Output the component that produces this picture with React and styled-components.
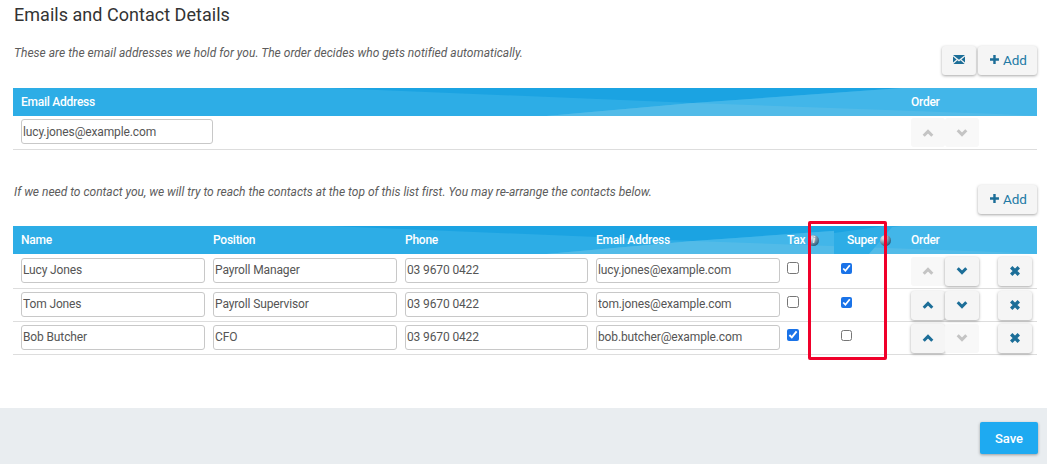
import styled, { createGlobalStyle } from 'styled-components';

const Global = createGlobalStyle`
  html, body {
    margin: 0;
    padding: 0;
    background: #fff;
    font-family: Roboto, "Liberation Sans", Arial, sans-serif;
  }
`;

const Page = styled.div`
  position: relative;
  width: 1047px;
  height: 464px;
  overflow: hidden;
  display: flex;
  flex-direction: column;
`;
const Content = styled.div`
  height: 408px;
  padding: 4px 10px 0 13px;
  box-sizing: border-box;
`;
const Title = styled.h2`
  margin: 0 0 0 1px;
  font-size: 18px;
  font-weight: 400;
  line-height: 21px;
  letter-spacing: 0.03px;
  color: #333;
`;
const Intro = styled.div`
  display: flex;
  justify-content: space-between;
  align-items: flex-start;
  height: ${({ $height }) => $height}px;
  margin-top: ${({ $top }) => $top}px;
`;
const Note = styled.p`
  margin: 0 0 0 1px;
  font-size: 12px;
  font-style: italic;
  line-height: 14px;
  letter-spacing: ${({ $spacing }) => $spacing}px;
  color: #5c5c5c;
`;
const Buttons = styled.div`
  display: flex;
  gap: 2px;
`;
const Button = styled.button`
  height: 29px;
  padding: 0 ${({ $wide }) => ($wide ? 10 : 0)}px 2px ${({ $wide }) => ($wide ? 12 : 0)}px;
  width: ${({ $wide }) => ($wide ? '59px' : '34px')};
  display: flex;
  align-items: center;
  justify-content: center;
  gap: 4px;
  border: 0;
  border-radius: 3px;
  background: #f5f5f5;
  box-shadow: 0 1px 3px rgba(0, 0, 0, 0.35);
  color: #2179a5;
  font: 400 13.5px Roboto, "Liberation Sans", sans-serif;
`;
const Head = styled.div`
  position: relative;
  height: 28px;
  background: #2dade6;
  overflow: hidden;
`;
const Wave = styled.svg`
  position: absolute;
  inset: 0;
  width: 100%;
  height: 100%;
`;
const Grid = styled.div`
  position: relative;
  display: grid;
  grid-template-columns: ${({ $cols }) => $cols};
  padding-left: 8px;
  align-items: center;
  height: 100%;
  box-sizing: border-box;
`;
const Col = styled.div`
  display: flex;
  align-items: center;
  gap: 3px;
  font-size: 12px;
  font-weight: 500;
  letter-spacing: -0.25px;
  color: #fff;
`;
const Info = styled.span`
  width: 11px;
  height: 11px;
  border-radius: 50%;
  background: radial-gradient(circle at 30% 25%, #cfdbe3 10%, #2c5f80 75%);
  color: #fff;
  font-size: 9px;
  font-style: italic;
  line-height: 11px;
  text-align: center;
`;
const Row = styled.div`
  height: ${({ $height }) => $height}px;
  border-bottom: 1px solid #ddd;
  box-sizing: border-box;
`;
const Field = styled.input`
  width: ${({ $width }) => $width}px;
  height: 25px;
  margin-bottom: 2px;
  padding: 0 2px 0 1px;
  box-sizing: border-box;
  border: 1px solid #c8c8c8;
  border-radius: 3px;
  background: #fff;
  color: #555;
  font: 400 12px Roboto, "Liberation Sans", sans-serif;
  letter-spacing: -0.13px;
  outline: none;
`;
const Check = styled.input.attrs({ type: 'checkbox', readOnly: true })`
  width: ${({ $size }) => $size}px;
  height: ${({ $size }) => $size}px;
  margin: 0 0 6px ${({ $left }) => $left}px;
  accent-color: #1a73e8;
`;
const Order = styled.div`
  display: flex;
`;
const Arrow = styled.button`
  width: 34px;
  height: 29px;
  padding: 0;
  display: flex;
  align-items: center;
  justify-content: center;
  border: 0;
  border-radius: 3px;
  background: ${({ disabled }) => (disabled ? '#f8f8f8' : '#f5f5f5')};
  box-shadow: ${({ disabled }) =>
    disabled ? 'none' : '0 1px 3px rgba(0, 0, 0, 0.35)'};
`;
const Footer = styled.div`
  flex: 1;
  display: flex;
  justify-content: flex-end;
  align-items: flex-start;
  padding: 14px 9px 0 0;
  background: #e9edf0;
`;
const Save = styled.button`
  width: 58px;
  height: 32px;
  border: 0;
  border-radius: 2px;
  background: #1eaaf1;
  box-shadow: 0 1px 3px rgba(0, 0, 0, 0.35);
  color: #fff;
  font: 500 13px Roboto, "Liberation Sans", sans-serif;
`;
const Highlight = styled.div`
  position: absolute;
  left: 808px;
  top: 221px;
  width: 79px;
  height: 139px;
  box-sizing: border-box;
  border: 3px solid #f0002a;
  border-radius: 2px;
  pointer-events: none;
`;

const Chevron = ({ up, disabled }) => (
  <svg width="12" height="8" viewBox="0 0 12 8">
    <path
      d={up ? 'M1.7 6.7 6 2.4l4.3 4.3' : 'M1.7 1.3 6 5.6l4.3-4.3'}
      fill="none"
      stroke={disabled ? '#c4c4c4' : '#1c6e98'}
      strokeWidth="3"
    />
  </svg>
);
const Plus = () => (
  <svg width="11" height="11" viewBox="0 0 11 11">
    <path d="M5.5 0v11M0 5.5h11" stroke="#1c6e98" strokeWidth="3" />
  </svg>
);
const Cross = () => (
  <svg width="10" height="10" viewBox="0 0 10 10">
    <path d="M1.2 1.2l7.6 7.6M8.8 1.2L1.2 8.8" stroke="#1c6e98" strokeWidth="3.4" />
  </svg>
);
const Mail = () => (
  <svg width="12" height="9" viewBox="0 0 12 9">
    <path d="M0 0h12L6 4.8zM0 1.6v6L3.6 4.5zM12 1.6v6L8.4 4.5zM4.4 5.2 6 6.4l1.6-1.2L11.6 9H.4z" fill="#1c6e98" />
  </svg>
);

const HeadWave = ({ patch }) => (
  <Wave viewBox="0 0 1024 28" preserveAspectRatio="none">
    <polygon points="317,0 889,0 680,15" fill="#1ba3e2" />
    <polygon points="889,0 1024,0 1024,28 533,28 680,15" fill="#42b6e9" />
    <polygon points="533,28 680,15 984,26 1024,28" fill="#52bbe8" />
    {patch && (
      <>
        <polygon points="821,0 880,0 856,28 821,28" fill="#2dade6" />
        <polygon points="821,0 872,0 821,7" fill="#1ba3e2" />
      </>
    )}
  </Wave>
);

const contactCols = '192px 192px 191px 191px 60px 64px 87px 1fr';
const contacts = [
  { name: 'Lucy Jones', role: 'Payroll Manager', mail: 'lucy.jones@example.com', tax: false, sup: true, up: false, down: true, height: 35 },
  { name: 'Tom Jones', role: 'Payroll Supervisor', mail: 'tom.jones@example.com', tax: false, sup: true, up: true, down: true, height: 33 },
  { name: 'Bob Butcher', role: 'CFO', mail: 'bob.butcher@example.com', tax: true, sup: false, up: true, down: false, height: 33 },
];

export default function App() {
  return (
    <Page>
      <Global />
      <Content>
        <Title>Emails and Contact Details</Title>
        <Intro $height={42} $top={21}>
          <Note $spacing={0.02}>
            These are the email addresses we hold for you. The order decides who gets notified automatically.
          </Note>
          <Buttons>
            <Button aria-label="Email"><Mail /></Button>
            <Button $wide><Plus />Add</Button>
          </Buttons>
        </Intro>
        <Head>
          <HeadWave />
          <Grid $cols="890px 1fr">
            <Col>Email Address</Col>
            <Col>Order</Col>
          </Grid>
        </Head>
        <Row $height={34}>
          <Grid $cols="890px 1fr">
            <Field $width={192} defaultValue="lucy.jones@example.com" />
            <Order>
              <Arrow disabled><Chevron up disabled /></Arrow>
              <Arrow disabled><Chevron disabled /></Arrow>
            </Order>
          </Grid>
        </Row>
        <Intro $height={41} $top={35}>
          <Note $spacing={-0.01}>
            If we need to contact you, we will try to reach the contacts at the top of this list first. You may re-arrange the contacts below.
          </Note>
          <Buttons>
            <Button $wide><Plus />Add</Button>
          </Buttons>
        </Intro>
        <Head>
          <HeadWave patch />
          <Grid $cols={contactCols}>
            <Col>Name</Col>
            <Col>Position</Col>
            <Col>Phone</Col>
            <Col>Email Address</Col>
            <Col>Tax<Info>i</Info></Col>
            <Col>Super<Info>i</Info></Col>
            <Col>Order</Col>
          </Grid>
        </Head>
        {contacts.map((c) => (
          <Row $height={c.height} key={c.name}>
            <Grid $cols={contactCols}>
              <Field $width={184} defaultValue={c.name} />
              <Field $width={184} defaultValue={c.role} />
              <Field $width={183} defaultValue="03 9670 0422" />
              <Field $width={184} defaultValue={c.mail} />
              <Check $size={12} $left={0} defaultChecked={c.tax} />
              <Check $size={11} $left={-6} defaultChecked={c.sup} />
              <Order>
                <Arrow disabled={!c.up}><Chevron up disabled={!c.up} /></Arrow>
                <Arrow disabled={!c.down}><Chevron disabled={!c.down} /></Arrow>
              </Order>
              <Arrow><Cross /></Arrow>
            </Grid>
          </Row>
        ))}
      </Content>
      <Footer>
        <Save>Save</Save>
      </Footer>
      <Highlight />
    </Page>
  );
}
